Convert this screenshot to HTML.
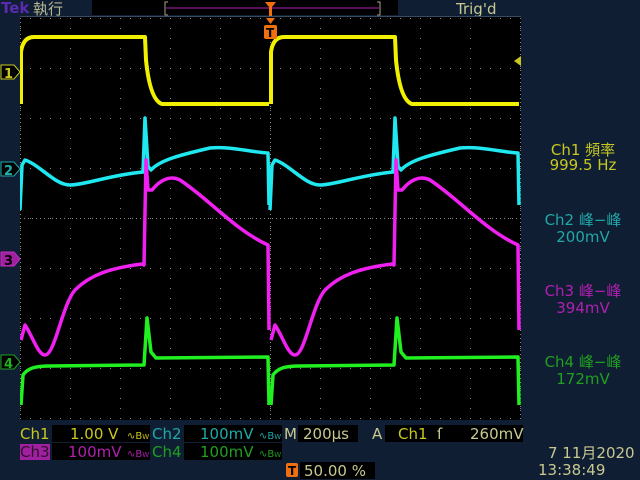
<!DOCTYPE html>
<html><head><meta charset="utf-8"><style>
html,body{margin:0;padding:0;background:#0f1e33;width:640px;height:480px;overflow:hidden}
svg{display:block}
text{font-family:"DejaVu Sans","Liberation Sans","Noto Sans CJK SC",sans-serif}
</style></head><body>
<svg width="640" height="480" viewBox="0 0 640 480" xmlns="http://www.w3.org/2000/svg">
<rect width="640" height="480" fill="#0f1e33"/>
<text x="1" y="13" font-size="15" font-weight="bold" fill="#5a2ab0" font-family="Liberation Sans,sans-serif">Tek</text>
<text x="33" y="14" font-size="15" fill="#b8b890" font-family="Liberation Sans,Noto Sans CJK TC,sans-serif">執行</text>
<rect x="92" y="0" width="306" height="15" fill="#000"/>
<path d="M168,2 H165 V15 H168 M377,2 H380 V15 H377" stroke="#b0a080" fill="none"/>
<line x1="166" y1="8" x2="379" y2="8" stroke="#b020b0" stroke-width="1"/>
<text x="456" y="14" font-size="15" fill="#c8c890">Trig'd</text>
<rect x="20" y="16" width="501" height="404" fill="#000"/>
<line x1="20" y1="16.5" x2="521" y2="16.5" stroke="#3a4a60"/>
<defs>
<pattern id="dh" width="10" height="50" patternUnits="userSpaceOnUse" x="20" y="18"><rect x="0" y="0" width="1" height="1" fill="#888"/></pattern>
<pattern id="dv" width="50" height="10" patternUnits="userSpaceOnUse" x="20" y="18"><rect x="0" y="0" width="1" height="1" fill="#888"/></pattern>
<clipPath id="c"><rect x="20" y="16" width="501" height="404"/></clipPath>
<g id="per" fill="none" stroke-linejoin="round">
<path d="M1,104 L1,52 Q3,37 14,37 L125,37 L126,60 Q130,100 142,104 L249,104" stroke="#f0f000" stroke-width="4"/>
<path d="M0,210 L2,165 L5,160 C20,165 35,185 50,185 C65,185 90,175 123,172 L125,118 L128,166 L131,170 C140,160 160,155 190,148 C210,146 230,152 248,153 L249,205" stroke="#20e8f0" stroke-width="3.5"/>
<path d="M1,340 L5,325 C12,335 18,355 25,355 C35,355 42,305 55,290 C70,275 90,268 122,264 L124,265 L126,160 L128,190 L132,190 C140,180 150,175 160,180 C190,200 215,230 248,245 L249,330" stroke="#f020f0" stroke-width="3.5"/>
<path d="M1,405 L3,375 C8,368 15,366 30,366 L124,365 L127,318 L131,352 L136,358 L248,357 L249,405" stroke="#20f020" stroke-width="3.5"/>
</g>
</defs>
<rect x="20" y="18" width="501" height="401" fill="url(#dh)"/>
<rect x="20" y="18" width="501" height="401" fill="url(#dv)"/>
<line x1="20" y1="218.5" x2="521" y2="218.5" stroke="#888" stroke-dasharray="1 3"/>
<line x1="270.5" y1="18" x2="270.5" y2="419" stroke="#888" stroke-dasharray="1 3"/>
<line x1="20.5" y1="18" x2="20.5" y2="419" stroke="#888" stroke-dasharray="1 3"/>
<line x1="520.5" y1="18" x2="520.5" y2="419" stroke="#888" stroke-dasharray="1 3"/>
<g clip-path="url(#c)">
<use href="#per" transform="translate(20,0)"/>
<use href="#per" transform="translate(270,0)"/>
</g>
<g font-size="13" font-weight="bold">
<path d="M1,65 H14 L20,72 L14,79 H1 Z" fill="#000" stroke="#c8c820"/><text x="4" y="78" fill="#c8c820">1</text>
<path d="M1,162 H14 L20,169 L14,176 H1 Z" fill="#000" stroke="#20a8a8"/><text x="4" y="175" fill="#20b0b0">2</text>
<path d="M1,252 H14 L20,259 L14,266 H1 Z" fill="#a020a0" stroke="#c030c0"/><text x="4" y="265" fill="#000">3</text>
<path d="M1,355 H14 L20,362 L14,369 H1 Z" fill="#000" stroke="#20a020"/><text x="4" y="368" fill="#20b020">4</text>
</g>
<path d="M521,56 L514,61 L521,66 Z" fill="#c8c820"/>
<path d="M265,2 H276 L272,7 V16 H269 V7 Z" fill="#f07010"/>
<path d="M266,18 H275 L270.5,24 Z" fill="#f07010"/>
<rect x="264" y="25" width="13" height="14" rx="2" fill="#f07010"/><text x="266" y="37" font-size="12" font-weight="bold" fill="#000">T</text>
<g font-size="15" text-anchor="middle" font-family="Liberation Sans,Noto Sans CJK TC,sans-serif">
<text x="583" y="155" fill="#c8c820">Ch1 頻率</text><text x="583" y="170" fill="#c8c820">999.5 Hz</text>
<text x="583" y="225" fill="#20a8a8">Ch2 峰−峰</text><text x="583" y="242" fill="#20a8a8">200mV</text>
<text x="583" y="296" fill="#b020b0">Ch3 峰−峰</text><text x="583" y="313" fill="#b020b0">394mV</text>
<text x="583" y="367" fill="#20a020">Ch4 峰−峰</text><text x="583" y="384" fill="#20a020">172mV</text>
</g>
<g font-size="15" font-family="Liberation Sans,sans-serif">
<rect x="52" y="425" width="98" height="17" fill="#000"/>
<rect x="184" y="425" width="98" height="17" fill="#000"/>
<rect x="298" y="425" width="60" height="17" fill="#000"/>
<rect x="385" y="425" width="138" height="17" fill="#000"/>
<rect x="52" y="443" width="98" height="17" fill="#000"/>
<rect x="184" y="443" width="98" height="17" fill="#000"/>
<rect x="300" y="462" width="75" height="17" fill="#000"/>
<rect x="20" y="444" width="30" height="16" fill="#a020a0"/>
<text x="20" y="439" fill="#c8c820">Ch1</text>
<text x="70" y="439" fill="#c8c820">1.00 V</text>
<text x="127" y="439" font-size="10" fill="#c8c820">∿B<tspan font-size="7">W</tspan></text>
<text x="152" y="439" fill="#20a8a8">Ch2</text>
<text x="200" y="439" fill="#20a8a8">100mV</text>
<text x="259" y="439" font-size="10" fill="#20a8a8">∿B<tspan font-size="7">W</tspan></text>
<text x="284" y="439" fill="#c8c890">M</text>
<text x="303" y="439" fill="#c8c890">200µs</text>
<text x="372" y="439" fill="#c8c890">A</text>
<text x="398" y="439" fill="#c8c820">Ch1</text>
<text x="437" y="439" fill="#c8c890">ſ</text>
<text x="470" y="439" fill="#c8c890">260mV</text>
<text x="20" y="457" fill="#301030">Ch3</text>
<text x="68" y="457" fill="#b020b0">100mV</text>
<text x="127" y="457" font-size="10" fill="#b020b0">∿B<tspan font-size="7">W</tspan></text>
<text x="152" y="457" fill="#20a020">Ch4</text>
<text x="200" y="457" fill="#20a020">100mV</text>
<text x="259" y="457" font-size="10" fill="#20a020">∿B<tspan font-size="7">W</tspan></text>
<rect x="286" y="463" width="12" height="14" rx="2" fill="#f07010"/><text x="288" y="475" font-size="12" font-weight="bold" fill="#000">T</text>
<text x="304" y="476" fill="#c8c890">50.00 %</text>
<text x="548" y="458" fill="#c8c890" font-family="Liberation Sans,Noto Sans CJK SC,sans-serif">7 11月2020</text>
<text x="538" y="475" fill="#c8c890">13:38:49</text>
</g>
</svg>
</body></html>
